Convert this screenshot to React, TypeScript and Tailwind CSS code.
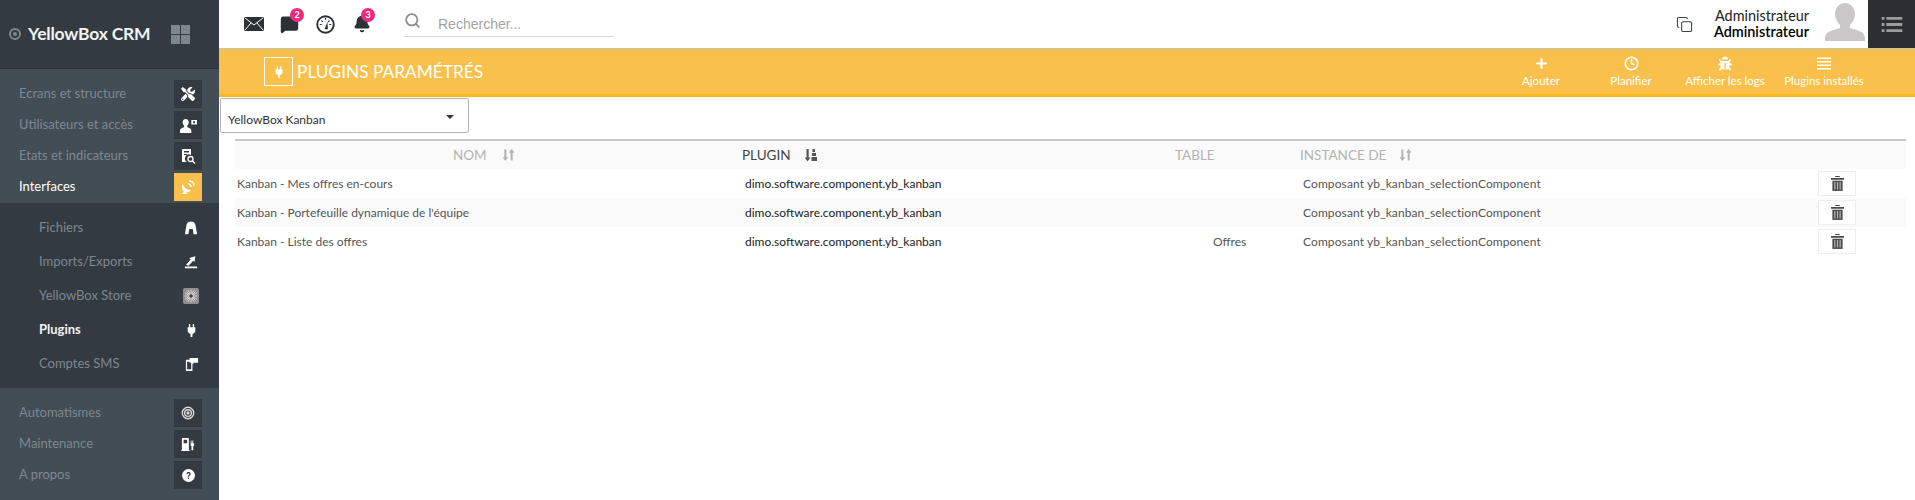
import React from 'react';
import { Plus, Clock, Search, MessageSquare, Bell, Copy } from 'lucide-react';
import { FaTools, FaBug } from 'react-icons/fa';

const Plug = ({ className }: { className?: string }) => (
    <svg viewBox="0 0 14 20" className={className} fill="currentColor">
        <path d="M3 0h2v5H3zM9 0h2v5H9zM1 5h12v5c0 3-2 5-4.500 5.300V20h-3v-4.700C3 15 1 13 1 10z" />
    </svg>
);

const SortIcon = ({ className }: { className?: string }) => (
    <svg viewBox="0 0 14 14" className={className} fill="currentColor">
        <path d="M2.500 1h2.200v8.500h2L3.600 13.500.5 9.500h2zM9.300 13V4.500h-2L10.400.5l3.100 4h-2V13z" />
    </svg>
);

const SortAmountIcon = ({ className }: { className?: string }) => (
    <svg viewBox="0 0 14 14" className={className} fill="currentColor">
        <path d="M2.500 1h2.200v8.500h1.800L3.600 13.500.7 9.500h1.800zM8.500 1h2.500v3H8.500zM8 5h4v3H8zM7.500 9h5.500v4H7.500z" />
    </svg>
);

const TrashIcon = () => (
    <svg viewBox="0 0 14 16" className="w-[13px] h-[15px]">
        <path d="M4.500 0h5v1h-5zM0 2h14v2H0z" fill="#4a4a4a" />
        <path d="M1.500 5h11v11h-11z" fill="#4a4a4a" />
        <path d="M3.500 6.500h1.300v8H3.500zM6.400 6.500h1.300v8H6.400zM9.200 6.500h1.300v8H9.200z" fill="#b5b5b5" />
    </svg>
);

const MailIcon = () => (
    <svg viewBox="0 0 20 14" className="w-[20px] h-[14px]">
        <path d="M0 0h20v14H0z" fill="#2d3136" />
        <path d="M.5.500 10 8 19.500.500M.5 13.500l6.500-7.500M19.500 13.500 13 6" fill="none" stroke="#fff" strokeWidth="1" />
    </svg>
);

const GaugeIcon = () => (
    <svg viewBox="0 0 20 20" className="w-[19px] h-[19px]" fill="none">
        <circle cx="10" cy="10" r="8.700" stroke="#2d3136" strokeWidth="2" />
        <path d="M10 3v2M4 10h2M14 10h2M5.800 5.800l1.400 1.400M14.200 5.800l-1.400 1.400" stroke="#2d3136" strokeWidth="1.300" />
        <path d="M9 15l3-8 .5 8z" fill="#2d3136" />
    </svg>
);

const UserLock = () => (
    <svg viewBox="0 0 20 16" className="w-[19px] h-[15px] text-white" fill="currentColor">
        <path d="M7 1c2 0 3.300 1.600 3.300 3.600 0 1.600-.7 3-1.600 3.700v1.500c2.500.8 4.300 1.500 4.300 3.200v3H1v-3c0-1.700 1.800-2.400 4.300-3.200V8.300C4.400 7.600 3.700 6.200 3.700 4.600 3.700 2.600 5 1 7 1z" />
        <path d="M13 2h6v5h-6zM15 3.500h2v2h-2z" fillRule="evenodd" />
    </svg>
);

const ReportIcon = () => (
    <svg viewBox="0 0 16 16" className="w-[16px] h-[16px] text-white" fill="currentColor">
        <path d="M2 1h9v6a4 4 0 0 0-4 7H2zM4 3v1.500h5V3zM4 6v1h3V6z" fillRule="evenodd" />
        <circle cx="10.500" cy="11" r="2.500" fill="none" stroke="currentColor" strokeWidth="1.300" />
        <path d="M12.300 12.800 15 15.500" stroke="currentColor" strokeWidth="1.300" />
    </svg>
);

const DishIcon = () => (
    <svg viewBox="0 0 16 16" className="w-[16px] h-[16px] text-white" fill="currentColor">
        <path d="M3 5c1 4 4 6 8 6-1 2-3 2.500-5 2.300L7 15H2l1.800-2.800C1.500 10.500 1.500 7 3 5z" />
        <path d="M8 5c2 0 3 1 3 3M9 2c3 0 5 2 5 5" fill="none" stroke="currentColor" strokeWidth="1.300" />
    </svg>
);

const TunnelIcon = () => (
    <svg viewBox="0 0 16 16" className="w-[14px] h-[14px] text-white" fill="currentColor">
        <path d="M1 15 3 4c.5-2.500 2.500-3.500 5-3.500S12.500 1.500 13 4l2 11h-4l-1-6H6l-1 6z" />
    </svg>
);

const ImportIcon = () => (
    <svg viewBox="0 0 16 16" className="w-[14px] h-[14px] text-white" fill="currentColor">
        <path d="M1 13h14v2H1zM4 12l-1.500-1 5-6L6 3.500 13 1.500 12 8l-1.500-1.500-5 5.500z" />
    </svg>
);

const StoreIcon = () => (
    <svg viewBox="0 0 16 16" className="w-[16px] h-[16px]">
        <rect width="16" height="16" rx="2" fill="#8f8f8f" />
        <path d="M8 1.500v13M1.500 8h13M3.500 3.500l9 9M12.500 3.500l-9 9M5 2l6 12M11 2 5 14M2 5l12 6M14 5 2 11" stroke="#e6e6e6" strokeWidth="0.800" />
        <circle cx="8" cy="8" r="1.800" fill="#3c3c3c" />
    </svg>
);

const SmsIcon = () => (
    <svg viewBox="0 0 16 16" className="w-[15px] h-[15px] text-white" fill="currentColor">
        <path d="M2 3h7v12H2zM3.300 5v8h4.400V5z" fillRule="evenodd" />
        <path d="M6 1h9v5H10v2L8 6H6z" />
    </svg>
);

const GlobeIcon = () => (
    <svg viewBox="0 0 16 16" className="w-[14px] h-[14px] text-[#d8d8d8]" fill="none" stroke="currentColor">
        <circle cx="8" cy="8" r="6.500" strokeWidth="1.600" />
        <circle cx="8" cy="8" r="3.800" strokeWidth="1.600" />
        <circle cx="8" cy="8" r="1.400" fill="currentColor" />
    </svg>
);

const FuelIcon = () => (
    <svg viewBox="0 0 16 16" className="w-[14px] h-[14px] text-white" fill="currentColor">
        <path d="M1 15V2c0-.6.4-1 1-1h6c.6 0 1 .4 1 1v13h1v1H0v-1zM3 3v4h4V3z" fillRule="evenodd" />
        <path d="M11 4h1v3h1V4h1v3h1v3h-1v5h-2v-5h-1z" />
    </svg>
);

const HelpIcon = () => (
    <svg viewBox="0 0 16 16" className="w-[13px] h-[13px]">
        <circle cx="8" cy="8" r="8" fill="white" />
        <path d="M5.500 6c0-1.500 1.100-2.300 2.600-2.300S10.700 4.500 10.700 6c0 1.700-2 1.700-2 3.500H7.200c0-2.300 1.900-2.300 1.900-3.500 0-.5-.4-.9-1-.9s-1 .4-1 .9zM7.200 10.500h1.600V12.300H7.200z" fill="#343a41" />
    </svg>
);

const topGroup = [
    { label: 'Ecrans et structure', icon: <FaTools className="w-[14px] h-[14px] text-white" /> },
    { label: 'Utilisateurs et accès', icon: <UserLock /> },
    { label: 'Etats et indicateurs', icon: <ReportIcon /> },
    { label: 'Interfaces', icon: <DishIcon />, active: true },
];

const subItems = [
    { label: 'Fichiers', icon: <TunnelIcon /> },
    { label: 'Imports/Exports', icon: <ImportIcon /> },
    { label: 'YellowBox Store', icon: <StoreIcon /> },
    { label: 'Plugins', icon: <Plug className="w-[9px] h-[13px] text-white" />, active: true },
    { label: 'Comptes SMS', icon: <SmsIcon /> },
];

const bottomGroup = [
    { label: 'Automatismes', icon: <GlobeIcon /> },
    { label: 'Maintenance', icon: <FuelIcon /> },
    { label: 'A propos', icon: <HelpIcon /> },
];

const actions = [
    { label: 'Ajouter', width: 'w-[90px]', icon: <Plus className="w-[15px] h-[15px]" strokeWidth={3.5} /> },
    { label: 'Planifier', width: 'w-[90px]', icon: <Clock className="w-[15px] h-[15px]" strokeWidth={2.5} /> },
    { label: 'Afficher les logs', width: 'w-[98px]', icon: <FaBug className="w-[14px] h-[15px]" /> },
    { label: 'Plugins installés', width: 'w-[100px]', icon: <svg viewBox="0 0 14 12" className="w-[14px] h-[15px]" fill="currentColor"><path d="M0 0h14v1.500H0zM0 3.500h14V5H0zM0 7h14v1.500H0zM0 10.500h14V12H0z" /></svg> },
];

const plugins = [
    { nom: 'Kanban - Mes offres en-cours', table: '' },
    { nom: "Kanban - Portefeuille dynamique de l'équipe", table: '' },
    { nom: 'Kanban - Liste des offres', table: 'Offres' },
];

const GroupRow = ({ label, icon, active }: { label: string; icon: React.ReactNode; active?: boolean }) => (
    <div className="flex items-center justify-between h-[28px] mb-[3px] pl-[19px] pr-[17px]">
        <span className={active ? 'text-[13px] text-white' : 'text-[13px] text-[#7d8790]'}>{label}</span>
        <div className={active ? 'w-[28px] h-[28px] flex items-center justify-center bg-[#f9c14b]' : 'w-[28px] h-[28px] flex items-center justify-center bg-[#343a41]'}>
            {icon}
        </div>
    </div>
);

const App: React.FC = () => {
    return (
        <div className="flex w-[1915px] h-[500px] overflow-hidden bg-white font-['Lato',sans-serif]">
            <aside className="w-[219px] shrink-0 flex flex-col bg-[#343a41]">
                <div className="h-[69px] shrink-0 flex items-center pl-[9px] border-b border-[#2c3137]">
                    <div className="w-[12px] h-[12px] rounded-full border-2 border-[#7d8790] flex items-center justify-center">
                        <div className="w-[4px] h-[4px] rounded-full bg-[#7d8790]" />
                    </div>
                    <span className="ml-[7px] text-[17.500px] font-bold text-[#f2f2f2] tracking-[-0.2px]">YellowBox CRM</span>
                    <div className="ml-[21px] grid grid-cols-2 gap-[1px]">
                        <div className="w-[9px] h-[9px] bg-[#7d8790]" />
                        <div className="w-[9px] h-[9px] bg-[#7d8790]" />
                        <div className="w-[9px] h-[9px] bg-[#7d8790]" />
                        <div className="w-[9px] h-[9px] bg-[#7d8790]" />
                    </div>
                </div>
                <div className="h-[134px] shrink-0 bg-[#434d56] pt-[11px]">
                    {topGroup.map((item) => <GroupRow key={item.label} {...item} />)}
                </div>
                <div className="h-[185px] shrink-0 pt-[8px]">
                    {subItems.map((item) => (
                        <div key={item.label} className="flex items-center h-[34px] pl-[39px]">
                            <span className={item.active ? 'text-[13px] font-bold text-[#f2f2f2] w-[138px]' : 'text-[13px] text-[#7d8790] w-[138px]'}>{item.label}</span>
                            <div className="w-[28px] flex justify-center">{item.icon}</div>
                        </div>
                    ))}
                </div>
                <div className="flex-1 bg-[#434d56] pt-[11px]">
                    {bottomGroup.map((item) => <GroupRow key={item.label} {...item} />)}
                </div>
            </aside>

            <main className="flex-1 min-w-0 flex flex-col">
                <header className="h-[48px] shrink-0 flex items-center pl-[25px]">
                    <MailIcon />
                    <div className="relative ml-[16px]">
                        <MessageSquare className="w-[19px] h-[19px] text-[#2d3136]" fill="currentColor" />
                        <span className="absolute -top-[7px] left-[10px] w-[14px] h-[14px] rounded-full bg-[#ee2a7b] text-white text-[9px] font-bold flex items-center justify-center">2</span>
                    </div>
                    <div className="ml-[17px]"><GaugeIcon /></div>
                    <div className="relative ml-[18px]">
                        <Bell className="w-[18px] h-[18px] text-[#2d3136]" fill="currentColor" />
                        <span className="absolute -top-[7px] left-[8px] w-[14px] h-[14px] rounded-full bg-[#ee2a7b] text-white text-[9px] font-bold flex items-center justify-center">3</span>
                    </div>
                    <div className="ml-[33px] mt-[6px] self-start w-[210px] h-[31px] flex items-center border-b border-[#d8d8d8]">
                        <Search className="w-[17px] h-[17px] text-[#8a8a8a] -mt-[2px]" strokeWidth={2.5} />
                        <span className="ml-[17px] mt-[6px] text-[14px] text-[#a3a3a3] font-['Liberation_Sans',sans-serif]">Rechercher...</span>
                    </div>
                    <div className="ml-auto flex items-center h-full">
                        <Copy className="w-[17px] h-[17px] text-[#3a414a]" strokeWidth={1.5} />
                        <div className="ml-[19px] w-[97px] text-right text-[14.400px] leading-[16px] text-[#222]">
                            <div>Administrateur</div>
                            <div className="font-semibold text-black">Administrateur</div>
                        </div>
                        <svg viewBox="0 0 40 38" className="ml-[16px] mb-[5px] w-[40px] h-[38px] text-[#c9c7c8]" fill="currentColor">
                            <path d="M20 0c6 0 10 5 10 11 0 4-2 8-5 11v3c6 2 15 3 15 10v3H0v-3c0-7 9-8 15-10v-3c-3-3-5-7-5-11C10 5 14 0 20 0z" />
                        </svg>
                        <div className="ml-[3px] w-[47px] h-full bg-[#2d2e30] flex items-center justify-center">
                            <svg viewBox="0 0 22 16" className="w-[22px] h-[15px] text-[#9a9ea2]" fill="currentColor">
                                <path d="M0 0h3v3H0zM5 0h17v3H5zM0 6.500h3v3H0zM5 6.500h17v3H5zM0 13h3v3H0zM5 13h17v3H5z" />
                            </svg>
                        </div>
                    </div>
                </header>

                <div className="h-[49px] shrink-0 flex items-center bg-[#f9c14b] border-t border-[#c4c4c4] border-b-[3px] border-b-[#fbb81c]">
                    <div className="ml-[45px] w-[29px] h-[29px] border border-white flex items-center justify-center">
                        <Plug className="w-[8px] h-[12px] text-white" />
                    </div>
                    <span className="ml-[4px] text-[17.300px] text-white">PLUGINS PARAMÉTRÉS</span>
                    <div className="ml-auto mr-[41px] flex">
                        {actions.map((action) => (
                            <div key={action.label} className={`${action.width} flex flex-col items-center text-white`}>
                                {action.icon}
                                <span className="mt-[2px] text-[11.500px] leading-[15px] whitespace-nowrap">{action.label}</span>
                            </div>
                        ))}
                    </div>
                </div>

                <div className="h-[35px] w-[249px] mt-px ml-px shrink-0 flex items-center justify-between pl-[7px] pr-[14px] border border-[#b5b5b5] rounded-[2px] text-[12px] text-[#333]">
                    <span className="mt-[8px]">YellowBox Kanban</span>
                    <div className="w-0 h-0 border-x-[4px] border-x-transparent border-t-[4px] border-t-[#333] mt-[2px]" />
                </div>

                <div className="ml-[16px] mt-[6px] w-[1671px] border-t-2 border-[#c8c8c8] text-[12px]">
                    <div className="h-[28px] grid grid-cols-[507px_433px_125px_1fr] items-center bg-[#fafafa] text-[13.500px] text-[#b3b3b3]">
                        <div className="pl-[218px] flex items-center gap-[15px]">NOM <SortIcon className="w-[13px] h-[14px]" /></div>
                        <div className="flex items-center gap-[13px] text-[#444]">PLUGIN <SortAmountIcon className="w-[14px] h-[14px] text-[#555]" /></div>
                        <div>TABLE</div>
                        <div className="flex items-center gap-[13px]">INSTANCE DE <SortIcon className="w-[13px] h-[14px]" /></div>
                    </div>
                    {plugins.map((plugin, idx) => (
                        <div key={plugin.nom} className={idx % 2 === 1 ? 'h-[29px] grid grid-cols-[510px_468px_90px_515px_1fr] items-center bg-[#fafafa]' : 'h-[29px] grid grid-cols-[510px_468px_90px_515px_1fr] items-center'}>
                            <div className="pl-[2px] text-[#555]">{plugin.nom}</div>
                            <div className="text-[#222]">dimo.software.component.yb_kanban</div>
                            <div className="text-[#555]">{plugin.table}</div>
                            <div className="text-[#555] tracking-[0.1px]">Composant yb_kanban_selectionComponent</div>
                            <div className="w-[38px] h-[25px] border border-[#eee] bg-white flex items-center justify-center">
                                <TrashIcon />
                            </div>
                        </div>
                    ))}
                </div>
            </main>
        </div>
    );
};

export default App;
